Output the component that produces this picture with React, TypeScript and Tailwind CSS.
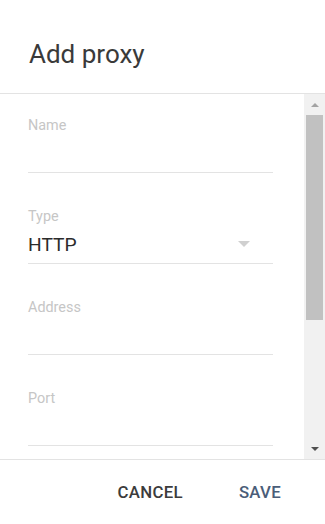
const fields = [
  { label: "Name", value: "" },
  { label: "Type", value: "HTTP", select: true },
  { label: "Address", value: "" },
  { label: "Port", value: "" },
];

const Field = ({ label, value, select }: { label: string; value: string; select?: boolean }) => (
  <div className="mb-[35px]">
    <div className="h-[17px] text-[14.4px] leading-[17px] text-[#c6c6c6]">{label}</div>
    <div className="flex h-[39px] items-end border-b border-[#e3e3e3] pb-[7px]">
      <div className="flex h-[23px] flex-1 items-center justify-between pr-[23px]">
        <span className="text-[19.2px] leading-[23px] text-[#2b2b2b]">{value}</span>
        {select && (
          <svg width="12" height="6" viewBox="0 0 12 6" className="mt-[-1px]">
            <path d="M0 0h12L6 6z" fill="#d0d0d0" />
          </svg>
        )}
      </div>
    </div>
  </div>
);

const App = () => {
  return (
    <div
      className="flex h-[524px] w-[325px] flex-col overflow-hidden bg-white"
      style={{ fontFamily: "Roboto, 'Liberation Sans', sans-serif" }}
    >
      <div className="h-[94px] shrink-0 border-b border-[#e3e3e3] pl-[29px] pt-[39px]">
        <h1 className="text-[26px] font-normal leading-[30px] text-[#3a3a3a]">Add proxy</h1>
      </div>

      <div className="flex min-h-0 flex-1">
        <div className="min-w-0 flex-1 overflow-hidden pl-[28px] pr-[31px] pt-[23px]">
          {fields.map((f) => (
            <Field key={f.label} label={f.label} value={f.value} select={f.select} />
          ))}
        </div>

        {/* scrollbar */}
        <div className="flex w-[21px] shrink-0 flex-col bg-[#f1f1f1]">
          <div className="flex h-[21px] items-center justify-center">
            <svg width="8" height="4" viewBox="0 0 8 4">
              <path d="M0 4L4 0l4 4z" fill="#a3a3a3" />
            </svg>
          </div>
          <div className="ml-[2px] h-[205px] w-[17px] bg-[#c1c1c1]" />
          <div className="flex-1" />
          <div className="flex h-[21px] items-center justify-center">
            <svg width="8" height="4" viewBox="0 0 8 4">
              <path d="M0 0h8L4 4z" fill="#505050" />
            </svg>
          </div>
        </div>
      </div>

      <div className="flex h-[65px] shrink-0 justify-end gap-[56px] border-t border-[#e3e3e3] pr-[44px] pt-[22px]">
        <button className="h-[20px] text-[16.8px] font-medium leading-[20px] tracking-[0.3px] text-[#3c3c3c]">
          CANCEL
        </button>
        <button className="h-[20px] text-[16.8px] font-medium leading-[20px] tracking-[0.3px] text-[#4a5d78]">
          SAVE
        </button>
      </div>
    </div>
  );
};

export default App;
